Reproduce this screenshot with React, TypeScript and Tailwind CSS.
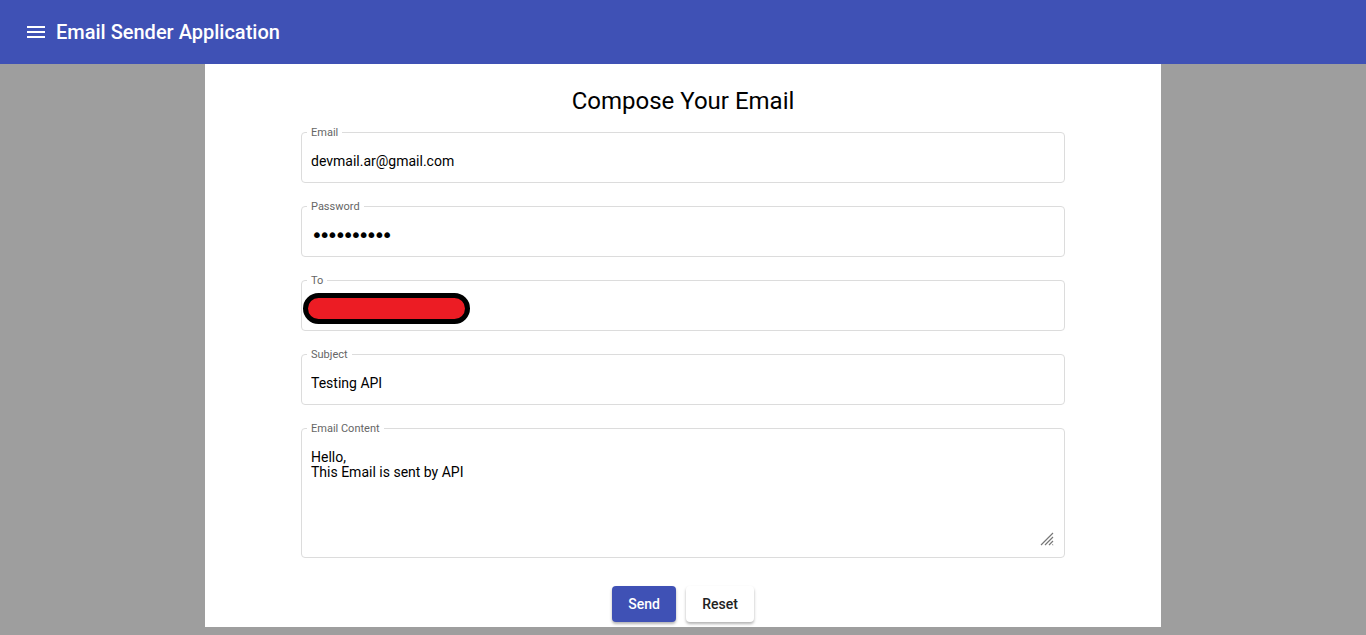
import React from 'react'

const Field = ({ label, children }: { label: string; children: React.ReactNode }) => (
  <fieldset className="relative rounded border border-[#dcdcdc] px-[5px]">
    <legend className="px-1 text-[11px] leading-[11px] text-[#666]">{label}</legend>
    {children}
  </fieldset>
)

const App = () => {
  const [form, setForm] = React.useState({
    email: 'devmail.ar@gmail.com',
    password: 'secretpass',
    subject: 'Testing API',
    content: 'Hello,\nThis Email is sent by API',
  })

  return (
    <div className="flex min-h-[635px] flex-col bg-[#9e9e9e] font-['Roboto',sans-serif]">
      <header className="flex h-16 items-center gap-2 bg-[#3f51b5] px-6 text-white">
        <svg viewBox="0 0 24 24" className="h-6 w-6 fill-white">
          <path d="M3 18h18v-2H3v2zm0-5h18v-2H3v2zm0-7v2h18V6H3z" />
        </svg>
        <h1 className="text-[20px] font-medium leading-none">Email Sender Application</h1>
      </header>
      <main className="mx-auto flex w-[956px] flex-col bg-white px-24 pb-[5px] pt-6">
        <h2 className="text-center text-[24px] leading-[27px] text-black">Compose Your Email</h2>
        <form className="mt-[12px] flex flex-col gap-[18px]" onSubmit={(e) => e.preventDefault()}>
          <Field label="Email">
            <input
              className="h-[44px] w-full px-1 pt-[2px] text-[14px] text-black outline-none"
              value={form.email}
              onChange={(e) => setForm({ ...form, email: e.target.value })}
            />
          </Field>
          <Field label="Password">
            <input
              type="password"
              className="h-[44px] w-full px-1 pt-[2px] font-['DejaVu_Sans',sans-serif] text-[20px] tracking-[-4px] text-black outline-none"
              value={form.password}
              onChange={(e) => setForm({ ...form, password: e.target.value })}
            />
          </Field>
          <Field label="To">
            <div className="flex h-[44px] items-center pt-px">
              <div className="-ml-1 h-[31px] w-[167px] rounded-full border-[5px] border-black bg-[#ec1c24]" />
            </div>
          </Field>
          <Field label="Subject">
            <input
              className="h-[44px] w-full px-1 pt-[2px] text-[14px] text-black outline-none"
              value={form.subject}
              onChange={(e) => setForm({ ...form, subject: e.target.value })}
            />
          </Field>
          <Field label="Email Content">
            <textarea
              className="block h-[123px] w-full resize-none px-1 pt-[16px] text-[14px] leading-[15px] text-black outline-none"
              value={form.content}
              onChange={(e) => setForm({ ...form, content: e.target.value })}
            />
            <svg viewBox="0 0 14 14" className="absolute bottom-[11px] right-[10px] h-[14px] w-[14px] stroke-[#777]">
              <path d="M13 1L1 13M13 5L5 13M13 9L9 13M13 12.5L12.5 13" strokeWidth="1.2" />
            </svg>
          </Field>
          <div className="mt-[10px] flex justify-center gap-[10px]">
            <button
              type="submit"
              className="h-9 w-16 rounded bg-[#3f51b5] text-[14px] font-medium text-white shadow-[0_2px_3px_rgba(0,0,0,0.3)]"
            >
              Send
            </button>
            <button
              type="reset"
              className="h-9 w-[68px] rounded bg-white text-[14px] font-medium text-[#222] shadow-[0_2px_3px_rgba(0,0,0,0.3)]"
            >
              Reset
            </button>
          </div>
        </form>
      </main>
    </div>
  )
}

export default App
